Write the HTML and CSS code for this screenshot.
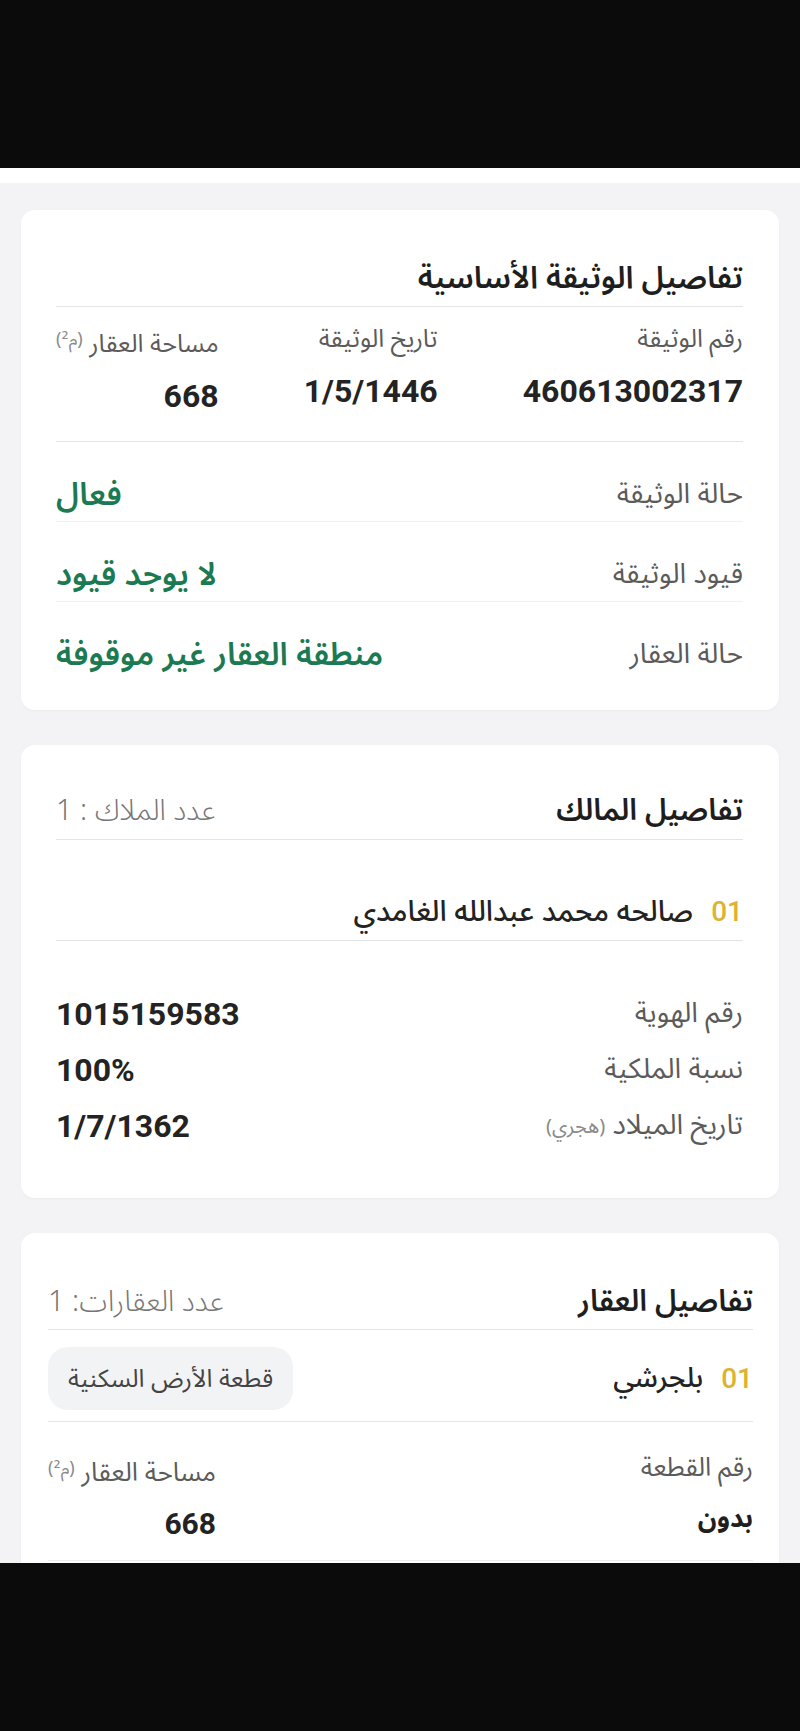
FILE: index.html
```html
<!DOCTYPE html>
<html lang="ar" dir="rtl">
<head>
<meta charset="utf-8">
<title>تفاصيل الوثيقة</title>
<link rel="stylesheet" href="styles.css">
</head>
<body>
<div class="statusbar"></div>
<main class="screen">
  <div class="strip"></div>
  <div class="content">
    <section class="card card-doc">
      <div class="card-head">
        <h2 class="card-title">تفاصيل الوثيقة الأساسية</h2>
      </div>
      <div class="summary">
        <div class="stat">
          <div class="label">رقم الوثيقة</div>
          <div class="num">460613002317</div>
        </div>
        <div class="stat">
          <div class="label">تاريخ الوثيقة</div>
          <div class="num">1/5/1446</div>
        </div>
        <div class="stat">
          <div class="label">مساحة العقار <span class="unit">(م²)</span></div>
          <div class="num">668</div>
        </div>
      </div>
      <div class="status-row">
        <span class="label">حالة الوثيقة</span>
        <span class="status">فعال</span>
      </div>
      <div class="status-row">
        <span class="label">قيود الوثيقة</span>
        <span class="status">لا يوجد قيود</span>
      </div>
      <div class="status-row">
        <span class="label">حالة العقار</span>
        <span class="status">منطقة العقار غير موقوفة</span>
      </div>
    </section>

    <section class="card card-owner">
      <div class="card-head">
        <h2 class="card-title">تفاصيل المالك</h2>
        <span class="count">عدد الملاك : 1</span>
      </div>
      <div class="item-row">
        <span class="idx">01</span>
        <span class="item-name">صالحه محمد عبدالله الغامدي</span>
      </div>
      <div class="fields">
        <div class="field">
          <span class="label">رقم الهوية</span>
          <span class="num">1015159583</span>
        </div>
        <div class="field">
          <span class="label">نسبة الملكية</span>
          <span class="num">100%</span>
        </div>
        <div class="field">
          <span class="label">تاريخ الميلاد <span class="unit unit-base">(هجري)</span></span>
          <span class="num">1/7/1362</span>
        </div>
      </div>
    </section>

    <section class="card card-prop">
      <div class="card-head">
        <h2 class="card-title">تفاصيل العقار</h2>
        <span class="count">عدد العقارات: 1</span>
      </div>
      <div class="item-row item-row-prop">
        <div class="item-main">
          <span class="idx">01</span>
          <span class="item-name">بلجرشي</span>
        </div>
        <span class="chip">قطعة الأرض السكنية</span>
      </div>
      <div class="prop-grid">
        <div class="stat">
          <div class="label">رقم القطعة</div>
          <div class="val-ar">بدون</div>
        </div>
        <div class="stat">
          <div class="label">مساحة العقار <span class="unit">(م²)</span></div>
          <div class="num num-sm">668</div>
        </div>
      </div>
      <div class="more"></div>
    </section>
  </div>
</main>
<div class="navbar"></div>
</body>
</html>
```

FILE: styles.css
```css
* { box-sizing: border-box; }
html, body { margin: 0; padding: 0; }
body {
  width: 800px;
  background: #000;
  font-family: "Noto Sans Arabic", "Noto Kufi Arabic", "DejaVu Sans", sans-serif;
  color: #222;
}
.statusbar { height: 168px; background: #0b0b0b; }
.navbar { height: 168px; background: #0b0b0b; }
.screen {
  height: 1395px;
  overflow: hidden;
  background: #f3f3f5;
}
.strip { height: 15px; background: #fff; }
.content {
  padding: 27px 21px 0;
  display: flex;
  flex-direction: column;
  gap: 35px;
}
.card {
  background: #fff;
  border-radius: 14px;
  padding: 0 36px 39px 35px;
  box-shadow: 0 1px 3px rgba(0,0,0,0.03);
}
.card-head {
  display: flex;
  justify-content: space-between;
  align-items: center;
  padding: 50px 0 10px;
  border-bottom: 1.5px solid #e4e4e7;
}
.card-owner .card-head { padding-top: 48px; }
.card-title {
  margin: 0;
  font-size: 30px;
  line-height: 36px;
  font-weight: 600;
  color: #1e1e1e;
}
.card-doc .card-title { font-size: 31px; }
.count {
  font-size: 29px;
  line-height: 36px;
  font-weight: 300;
  color: #777;
}
.label {
  font-size: 25px;
  line-height: 28px;
  color: #5b5b5b;
}
.unit {
  font-size: 18px;
  color: #8a8a8a;
  vertical-align: 7px;
}
.unit-base { font-size: 20px; vertical-align: 1px; }
.num {
  font-family: Roboto, "Liberation Sans", sans-serif;
  font-weight: 700;
  font-size: 32px;
  line-height: 40px;
  color: #232323;
  direction: ltr;
}
.summary {
  display: flex;
  justify-content: space-between;
  padding: 18px 0 25px;
  border-bottom: 1.5px solid #e4e4e7;
}
.summary .num { margin-top: 18px; text-align: right; }
.status-row {
  display: flex;
  justify-content: space-between;
  align-items: center;
  padding: 37px 0 10px;
  border-bottom: 1px solid #f1f1f3;
}
.status-row .label { font-size: 28px; line-height: 32px; }
.status-row:last-child { border-bottom: 0; padding-bottom: 0; }
.status {
  font-size: 32px;
  line-height: 32px;
  font-weight: 600;
  color: #1c7a52;
}

.item-row {
  display: flex;
  align-items: center;
  gap: 18px;
  padding: 56px 0 12px;
  border-bottom: 1.5px solid #e4e4e7;
}
.idx {
  font-family: Roboto, "Liberation Sans", sans-serif;
  font-size: 28px;
  line-height: 32px;
  font-weight: 500;
  color: #dcb432;
}
.item-name {
  font-size: 29px;
  line-height: 32px;
  font-weight: 500;
  color: #232323;
}
.fields {
  display: flex;
  flex-direction: column;
  gap: 16px;
  padding-top: 53px;
}
.field {
  display: flex;
  justify-content: space-between;
  align-items: center;
  height: 40px;
}
.field .label { font-size: 28px; line-height: 36px; }
.card-owner { padding-bottom: 52px; }

.card-prop { padding: 0 26px 0 27px; }
.card-prop .card-head { padding-top: 51px; padding-bottom: 9px; }
.item-row-prop {
  justify-content: space-between;
  padding: 17px 0 11px;
}
.item-main { display: flex; align-items: center; gap: 18px; }
.item-row-prop .item-name { font-size: 28px; }
.chip {
  display: flex;
  align-items: center;
  justify-content: center;
  height: 63px;
  width: 245px;
  border-radius: 20px;
  background: #f2f3f5;
  font-size: 25px;
  color: #444;
}
.prop-grid {
  display: flex;
  justify-content: space-between;
  padding: 32px 0 16px;
  border-bottom: 1px solid #eeeef0;
}
.prop-grid .label { font-size: 26px; }
.prop-grid .stat:last-child .num { text-align: right; }
.val-ar {
  margin-top: 17px;
  font-size: 26px;
  line-height: 40px;
  font-weight: 700;
  color: #1f1f1f;
}
.num-sm { margin-top: 17px; font-size: 30px; }
.more { height: 60px; }
```
